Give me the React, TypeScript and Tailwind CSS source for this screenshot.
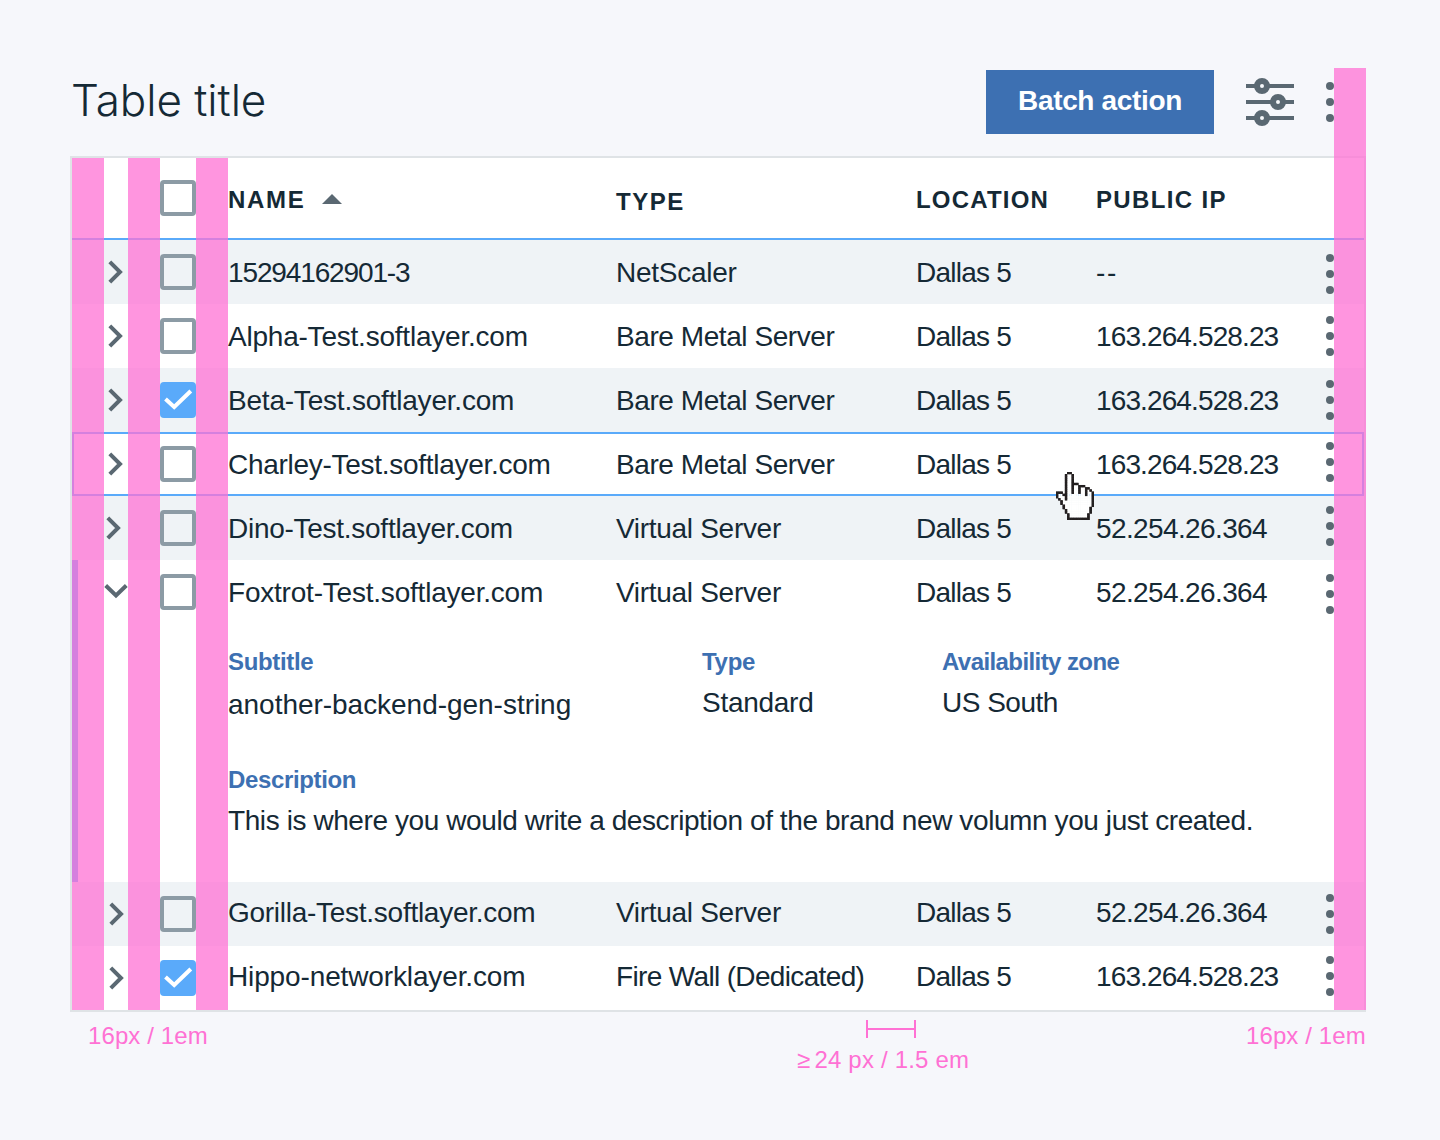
import React from "react";

const HAND = [
  ".....XX..........",
  "....XooX.........",
  "....XooX.........",
  "....XooX.........",
  "....XooX.........",
  "....XooXXX.......",
  "....XooXooXXX....",
  "....XooXooXooXX..",
  "....XooXooXooXoX.",
  "XXX.XooXooXooXooX",
  "XooXXooooooooXooX",
  "XoooXoooooooooooX",
  ".XooXoooooooooooX",
  "..XoooooooooooooX",
  "..XoooooooooooooX",
  "...XooooooooooooX",
  "...XoooooooooooX.",
  "....XooooooooooX.",
  "....XooooooooooX.",
  ".....XooooooooX..",
  ".....XooooooooX..",
  ".....XXXXXXXXXX..",
];

type Row = {
  name: string;
  nameCls: string;
  type: string;
  typeCls: string;
  ip: string;
  ipCls: string;
  bg: string;
  dots: string;
  chevron: string;
  checked?: boolean;
};

const IP_A = "tracking-[-0.88px]";
const IP_B = "tracking-[-0.62px]";
const BARE = "tracking-[-0.43px]";
const VIRTUAL = "tracking-[-0.3px]";

const rows: Row[] = [
  { name: "15294162901-3", nameCls: "tracking-[-1.13px]", type: "NetScaler", typeCls: "tracking-[-0.25px]", ip: "--", ipCls: "tracking-[1.8px]", bg: "bg-[#eff3f6]", dots: "top-[14px]", chevron: "ml-[34px]" },
  { name: "Alpha-Test.softlayer.com", nameCls: "tracking-[-0.22px]", type: "Bare Metal Server", typeCls: BARE, ip: "163.264.528.23", ipCls: IP_A, bg: "bg-white", dots: "top-[12px]", chevron: "ml-[34px]" },
  { name: "Beta-Test.softlayer.com", nameCls: "tracking-[-0.21px]", type: "Bare Metal Server", typeCls: BARE, ip: "163.264.528.23", ipCls: IP_A, bg: "bg-[#eff3f6]", dots: "top-[12px]", chevron: "ml-[34px]", checked: true },
  { name: "Charley-Test.softlayer.com", nameCls: "tracking-[-0.28px]", type: "Bare Metal Server", typeCls: BARE, ip: "163.264.528.23", ipCls: IP_A, bg: "bg-white shadow-[inset_0_0_0_2px_#5aaafa]", dots: "top-[10px]", chevron: "ml-[34px]" },
  { name: "Dino-Test.softlayer.com", nameCls: "tracking-[-0.27px]", type: "Virtual Server", typeCls: VIRTUAL, ip: "52.254.26.364", ipCls: IP_B, bg: "bg-[#eff3f6]", dots: "top-[10px]", chevron: "ml-[32px]" },
  { name: "Foxtrot-Test.softlayer.com", nameCls: "tracking-[-0.21px]", type: "Virtual Server", typeCls: VIRTUAL, ip: "52.254.26.364", ipCls: IP_B, bg: "bg-white", dots: "top-[14px]", chevron: "down" },
];

const tailRows: Row[] = [
  { name: "Gorilla-Test.softlayer.com", nameCls: "tracking-[-0.27px]", type: "Virtual Server", typeCls: VIRTUAL, ip: "52.254.26.364", ipCls: IP_B, bg: "bg-[#eff3f6]", dots: "top-[12px]", chevron: "ml-[34.5px]" },
  { name: "Hippo-networklayer.com", nameCls: "tracking-[-0.13px]", type: "Fire Wall (Dedicated)", typeCls: "tracking-[-0.65px]", ip: "163.264.528.23", ipCls: IP_A, bg: "bg-white", dots: "top-[10px]", chevron: "ml-[34.5px]", checked: true },
];

function Dots() {
  return (
    <div className="flex w-2 flex-col gap-2">
      <i className="size-2 rounded-full bg-[#5a6872]" />
      <i className="size-2 rounded-full bg-[#5a6872]" />
      <i className="size-2 rounded-full bg-[#5a6872]" />
    </div>
  );
}

function Checkbox({ checked }: { checked?: boolean }) {
  if (checked) {
    return (
      <div className="size-9 shrink-0 rounded-[4px] bg-[#5aaafa]">
        <svg width="36" height="36" viewBox="0 0 36 36" fill="none" stroke="#fff" strokeWidth="4">
          <path d="M5.5 17 L14.2 25 L30.8 9" />
        </svg>
      </div>
    );
  }
  return <div className="size-9 shrink-0 rounded-[4px] border-4 border-[#8c9ba5]" />;
}

function Chevron({ kind }: { kind: string }) {
  return (
    <div className="w-[88px] shrink-0">
      {kind === "down" ? (
        <svg className="ml-8" width="24" height="24" viewBox="0 0 24 24" fill="none" stroke="#5a6872" strokeWidth="4">
          <path d="M1.7 5.5 L12 15.5 L22.3 5.5" />
        </svg>
      ) : (
        <svg className={kind} width="20" height="24" viewBox="0 0 20 24" fill="none" stroke="#5a6872" strokeWidth="4">
          <path d="M3.8 1.8 L14 12 L3.8 22.2" />
        </svg>
      )}
    </div>
  );
}

function TableRow({ r, textCls }: { r: Row; textCls: string }) {
  return (
    <div className={"relative flex h-16 items-center text-[28px] text-[#152935] " + r.bg}>
      <Chevron kind={r.chevron} />
      <Checkbox checked={r.checked} />
      <div className={"ml-8 flex whitespace-nowrap leading-none " + textCls}>
        <div className={"w-[388px] shrink-0 " + r.nameCls}>{r.name}</div>
        <div className={"w-[300px] shrink-0 " + r.typeCls}>{r.type}</div>
        <div className="w-[180px] shrink-0 tracking-[-0.75px]">Dallas 5</div>
        <div className={r.ipCls}>{r.ip}</div>
      </div>
      <div className={"absolute left-[1254px] " + r.dots}>
        <Dots />
      </div>
    </div>
  );
}

function Handle({ x, y }: { x: number; y: number }) {
  return <circle cx={x} cy={y} r="5" fill="#f5f7fa" stroke="#5a6872" strokeWidth="6" />;
}

export default function App() {
  return (
    <div className="relative h-[1140px] w-[1440px] overflow-hidden bg-[#f6f7fb] pt-[70px] font-['Liberation_Sans',Arial,sans-serif]">
      <header className="flex h-16 items-start pl-[71px]">
        <h1 className="mt-[2px] w-[915px] font-['Inter',sans-serif] text-[44px] leading-[56px] font-light tracking-[-0.05px] text-[#152935]">Table title</h1>
        <button className="h-16 w-[228px] bg-[#3d70b2] pb-[2px] text-[28px] leading-none font-bold tracking-[-0.35px] text-white">
          Batch action
        </button>
        <svg className="mt-2 ml-8" width="48" height="48" viewBox="0 0 48 48">
          <path d="M0 8H48M0 24H48M0 40H48" stroke="#5a6872" strokeWidth="4" />
          <Handle x={16} y={8} />
          <Handle x={32} y={24} />
          <Handle x={16} y={40} />
        </svg>
        <div className="mt-3 ml-8">
          <Dots />
        </div>
      </header>

      <main className="relative mt-[22px] ml-[70px] w-[1296px] border-2 border-[#dfe3e6] bg-white">
        <div className="flex h-[82px] items-center border-b-2 border-[#5aaafa] text-[24px] leading-none font-bold tracking-[1.5px] text-[#152935]">
          <div className="w-[88px] shrink-0" />
          <Checkbox />
          <div className="ml-8 flex w-[388px] shrink-0 items-center pt-[3px]">
            <span className="w-[94px] tracking-[1.7px]">NAME</span>
            <svg className="mb-[2px]" width="20" height="10" viewBox="0 0 20 10">
              <path d="M0 10 L10 0 L20 10Z" fill="#5a6872" />
            </svg>
          </div>
          <div className="w-[300px] shrink-0 pt-[7px]">TYPE</div>
          <div className="w-[180px] shrink-0 pt-[3px] tracking-[1.2px]">LOCATION</div>
          <div className="pt-[3px] tracking-[1.35px] whitespace-nowrap">PUBLIC IP</div>
        </div>
        {rows.map((r) => (
          <TableRow key={r.name} r={r} textCls="pt-[2px]" />
        ))}

        <section className="h-[258px] pt-[22px] pl-[156px] text-[28px] leading-8 text-[#152935]">
          <div className="flex">
            <div className="w-[474px]">
              <h2 className="text-[24px] leading-8 font-bold tracking-[-0.33px] text-[#3d70b2]">Subtitle</h2>
              <p className="mt-[11px] tracking-[-0.03px]">another-backend-gen-string</p>
            </div>
            <div className="w-[240px]">
              <h2 className="text-[24px] leading-8 font-bold tracking-[-0.3px] text-[#3d70b2]">Type</h2>
              <p className="mt-[9px] tracking-[-0.27px]">Standard</p>
            </div>
            <div>
              <h2 className="text-[24px] leading-8 font-bold tracking-[-0.58px] text-[#3d70b2]">Availability zone</h2>
              <p className="mt-[9px] tracking-[-0.5px]">US South</p>
            </div>
          </div>
          <h2 className="mt-[43px] text-[24px] leading-8 font-bold tracking-[-0.35px] text-[#3d70b2]">Description</h2>
          <p className="mt-[9px] tracking-[-0.41px] whitespace-nowrap">
            This is where you would write a description of the brand new volumn you just created.
          </p>
        </section>

        {tailRows.map((r) => (
          <TableRow key={r.name} r={r} textCls="pb-[2px]" />
        ))}

        {/* accent of the expanded row */}
        <div className="absolute top-[402px] left-0 h-[322px] w-[6px] bg-[#5aaafa]" />
        {/* spacing guides */}
        <div className="absolute inset-y-0 left-0 w-8 bg-[#ff71d4]/75" />
        <div className="absolute inset-y-0 left-[56px] w-8 bg-[#ff71d4]/75" />
        <div className="absolute inset-y-0 left-[124px] w-8 bg-[#ff71d4]/75" />
        <div className="absolute top-[-90px] right-[-2px] bottom-0 w-8 bg-[#ff71d4]/75" />
        {/* pointer */}
        <svg className="absolute top-[314px] left-[984px]" width="38" height="48" viewBox="0 0 17 22" preserveAspectRatio="none">
          {HAND.map((line, y) =>
            line.split("").map((c, x) =>
              c === "." ? null : (
                <rect key={x + "-" + y} x={x} y={y} width="1.05" height="1.05" fill={c === "X" ? "#231f20" : "#fff"} />
              )
            )
          )}
          {HAND.map((line, y) =>
            line.split("").map((c, x) =>
              c === "X" ? <rect key={x + "-" + y} x={x - 0.05} y={y - 0.05} width="1.1" height="1.1" fill="#231f20" /> : null
            )
          )}
        </svg>
      </main>

      <footer className="flex items-start pl-[88px] text-[24px] leading-8 text-[#ff71d4]">
        <div className="mt-2 w-[709px] tracking-[0.1px] whitespace-nowrap">16px / 1em</div>
        <div className="mt-2 w-[449px]">
          <div className="ml-[69px] flex h-[18px] w-[50px] items-center border-x-2 border-[#ff71d4]">
            <div className="h-[2px] w-full bg-[#ff71d4]" />
          </div>
          <div className="mt-[6px] tracking-[0.2px] whitespace-nowrap">
            <span className="mr-1">≥</span>24 px / 1.5 em
          </div>
        </div>
        <div className="mt-2 tracking-[0.1px] whitespace-nowrap">16px / 1em</div>
      </footer>
    </div>
  );
}
